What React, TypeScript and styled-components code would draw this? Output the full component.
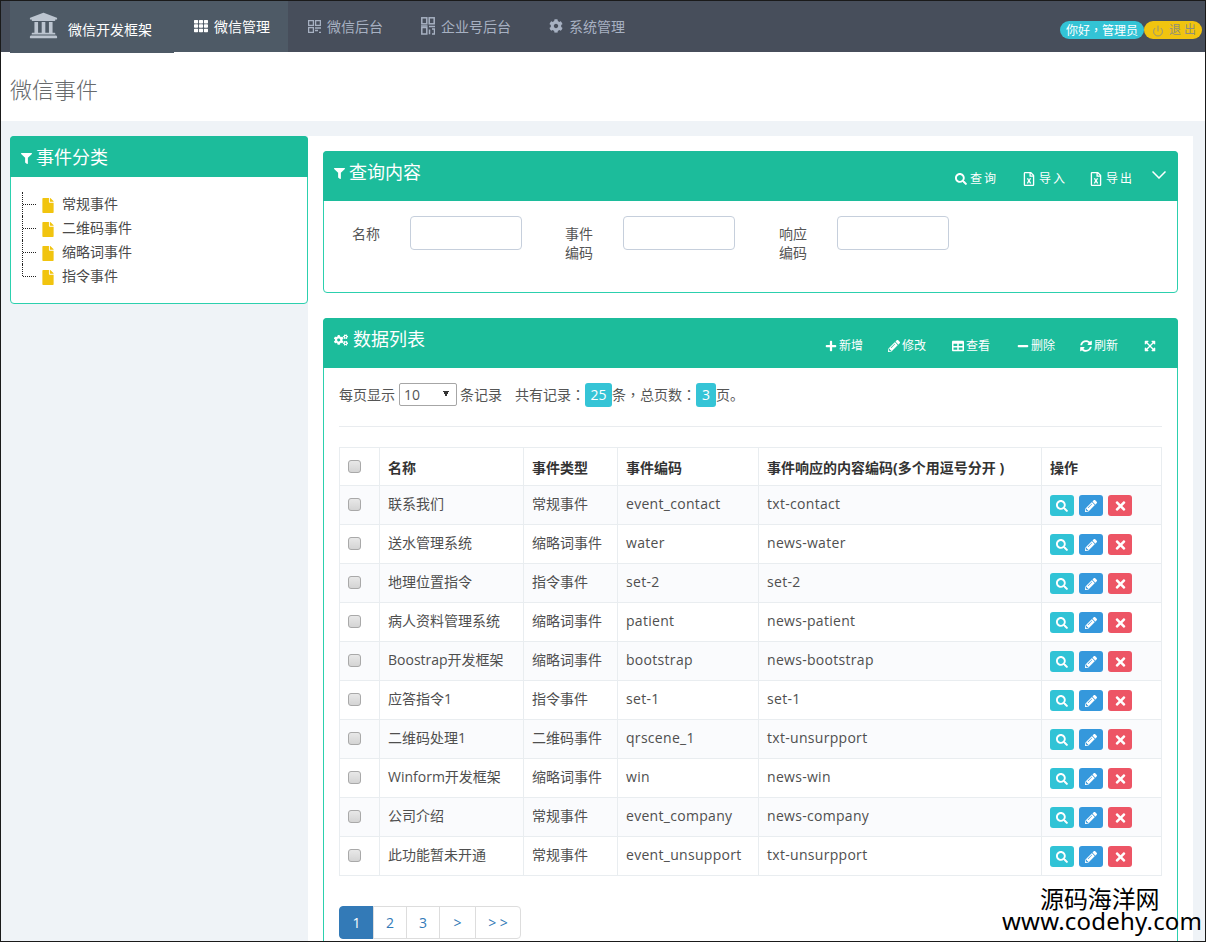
import React from "react";
import styled, { createGlobalStyle } from "styled-components";
import {
  FaUniversity, FaTh, FaCog, FaCogs, FaFilter, FaSearch, FaPlus, FaPencilAlt,
  FaTable, FaMinus, FaSyncAlt, FaExpandArrowsAlt, FaTimes, FaRegFileExcel, FaFile,
} from "react-icons/fa";
import { Power } from "lucide-react";

const FONT = `"Open Sans", "Noto Sans CJK SC", sans-serif`;

const Global = createGlobalStyle`
  html, body { margin: 0; padding: 0; background: #fff; }
  body { font-family: ${FONT}; font-size: 14px; color: #4f4f4f; }
  * { box-sizing: border-box; }
`;

const Frame = styled.div`
  position: relative;
  width: 1206px;
  height: 942px;
  border: 1px solid #1a1a1a;
  overflow: hidden;
  display: flex;
  flex-direction: column;
  background: #eff3f7;
`;

const TopBar = styled.header`
  flex: none;
  height: 51px;
  background: #474e5b;
  display: flex;
  align-items: flex-start;
  padding-left: 9px;
  position: relative;
  z-index: 1;
`;

const Brand = styled.div`
  width: 164px;
  height: 52px;
  background: #4e5a66;
  display: flex;
  align-items: center;
  padding-left: 19px;
  color: #fff;
  font-size: 14px;
  gap: 10px;
  svg { color: #bcc5d0; width: 29px; height: 29px; margin-top: -4px; }
  span { margin-top: 3px; }
`;

const NavItem = styled.div<{ $active?: boolean; $w: number }>`
  width: ${(p) => p.$w}px;
  height: 51px;
  display: flex;
  align-items: center;
  padding-left: 20px;
  gap: 6px;
  font-size: 14px;
  padding-bottom: 1px;
  color: ${(p) => (p.$active ? "#fff" : "#a7b1c2")};
  background: ${(p) => (p.$active ? "#4e5a66" : "transparent")};
  svg { flex: none; }
`;

const NavIconTh = styled(FaTh)`
  width: 14px;
  height: 14px;
`;

const NavIconCog = styled(FaCog)`
  width: 14px;
  height: 14px;
`;

const UserArea = styled.div`
  margin-left: auto;
  margin-top: 20px;
  margin-right: 3px;
  display: flex;
  height: 18px;
`;

const Hello = styled.div`
  width: 84px;
  background: #33c3d5;
  color: #fff;
  font-size: 12px;
  line-height: 18px;
  border-radius: 9px;
  text-align: center;
`;

const Logout = styled.div`
  width: 58px;
  background: #f1c40f;
  color: #8f8f7a;
  font-size: 12px;
  line-height: 18px;
  border-radius: 9px;
  display: flex;
  align-items: center;
  padding-left: 8px;
  gap: 5px;
  svg { width: 12px; height: 12px; color: #74849a; margin-top: 1px; }
`;

const TitleBar = styled.div`
  flex: none;
  height: 69px;
  background: #fff;
  display: flex;
  align-items: center;
  padding: 2px 0 0 9px;
  font-size: 22px;
  color: #676a6c;
  font-weight: 300;
`;

const Content = styled.div`
  flex: 1;
  min-height: 0;
  padding: 15px 0 0 9px;
  display: flex;
  align-items: flex-start;
`;

const Sidebar = styled.aside`
  flex: none;
  width: 298px;
`;

const Main = styled.main`
  flex: none;
  width: 885px;
  height: 100%;
  min-height: 900px;
  background: #fff;
  padding: 15px;
  display: flex;
  flex-direction: column;
  gap: 25px;
`;

const Panel = styled.section<{ $h?: number }>`
  border: 1px solid #2cd0ae;
  border-radius: 4px;
  background: #fff;
  flex: none;
  ${(p) => (p.$h ? `height: ${p.$h}px;` : "")}
`;

const PanelHead = styled.div<{ $h: number }>`
  height: ${(p) => p.$h}px;
  margin: -1px -1px 0;
  background: #1cbc9b;
  border-radius: 4px 4px 0 0;
  color: #fff;
  display: flex;
  align-items: flex-start;
  padding-left: 11px;
`;

const PanelTitle = styled.div<{ $top: number }>`
  font-size: 18px;
  line-height: 24px;
  margin-top: ${(p) => p.$top}px;
  display: flex;
  align-items: center;
  gap: 4px;
  svg { width: 11px; height: 11px; margin-top: 2px; }
`;

const WideIconTitle = styled(PanelTitle)`
  gap: 5px;
  svg { width: 14px; height: 14px; margin-top: 1px; }
`;

const Actions = styled.div<{ $top: number }>`
  margin-left: auto;
  display: flex;
  align-items: center;
  height: 16px;
  margin-top: ${(p) => p.$top}px;
`;

const Action = styled.div<{ $w: number; $spaced?: boolean }>`
  width: ${(p) => p.$w}px;
  display: flex;
  align-items: center;
  font-size: 12px;
  line-height: 16px;
  gap: ${(p) => (p.$spaced ? 3 : 2)}px;
  letter-spacing: ${(p) => (p.$spaced ? "2px" : "0")};
  white-space: nowrap;
  svg { width: 12px; height: 12px; flex: none; }
`;

const FileAction = styled(Action)`
  gap: 4px;
  svg { width: 12px; height: 14px; }
`;

const ChevronAction = styled(Action)`
  svg { width: 14px; height: 8px; margin-top: -9px; fill: none; stroke: #fff; stroke-width: 1.5; }
`;

const Tree = styled.ul`
  list-style: none;
  margin: 0;
  padding: 15px 0 15px 11px;
  height: 126px;
`;

const TreeRow = styled.li`
  height: 24px;
  display: flex;
  align-items: flex-start;
  font-size: 14px;
  line-height: 24px;
  color: #4a4a4a;
`;

const Connector = styled.span<{ $last?: boolean }>`
  flex: none;
  width: 14px;
  height: ${(p) => (p.$last ? 12 : 24)}px;
  border-left: 1px dotted #222;
  position: relative;
  &::after {
    content: "";
    position: absolute;
    left: 0;
    top: 12px;
    width: 13px;
    border-top: 1px dotted #222;
  }
`;

const TreeIcon = styled(FaFile)`
  flex: none;
  width: 12px;
  height: 15px;
  margin: 6px 8px 0 6px;
  color: #f1c40f;
`;

const FilterRow = styled.div`
  display: grid;
  grid-template-columns: 213px 214px 214px;
  padding: 14px 0 0 28px;
  height: 91px;
`;

const FilterGroup = styled.div`
  display: flex;
  align-items: flex-start;
`;

const FilterLabel = styled.label`
  width: 58px;
  flex: none;
  font-size: 14px;
  line-height: 19px;
  padding: 9px 29px 0 0;
  word-break: break-all;
  color: #555;
`;

const Field = styled.input`
  width: 112px;
  height: 34px;
  border: 1px solid #c6cfdc;
  border-radius: 4px;
  background: #fff;
  outline: none;
  margin-top: 1px;
`;

const PanelBody = styled.div`
  padding: 15px 15px 20px;
`;

const PageBar = styled.div`
  display: flex;
  align-items: center;
  height: 22px;
  margin-bottom: 2px;
  font-size: 14px;
  color: #555;
  white-space: pre;
`;

const Punct = styled.span`
  font-family: "Noto Sans CJK TC", sans-serif;
`;

const TotalLabel = styled.span`
  margin-left: 2px;
`;

const PageSelect = styled.select`
  appearance: none;
  align-self: flex-start;
  width: 58px;
  height: 23px;
  margin: 0 3px 0 4px;
  border: 1px solid #a6a6a6;
  border-radius: 2px;
  background:
    linear-gradient(to top right, transparent 50%, #333 50%) 43px 7px / 3px 6px no-repeat,
    linear-gradient(to top left, transparent 50%, #333 50%) 46px 7px / 3px 6px no-repeat,
    #fff;
  font-family: ${FONT};
  font-size: 14px;
  color: #555;
  padding-left: 4px;
`;

const Count = styled.span<{ $w: number }>`
  align-self: flex-start;
  width: ${(p) => p.$w}px;
  height: 24px;
  background: #35c4d6;
  border-radius: 3px;
  color: #fff;
  font-size: 14px;
  line-height: 24px;
  text-align: center;
`;

const Rule = styled.hr`
  border: 0;
  border-top: 1px solid #e9ecef;
  margin: 21px 0 20px;
`;

const Table = styled.table`
  width: 823px;
  border-collapse: collapse;
  table-layout: fixed;
  font-size: 14px;
  color: #4f4f4f;
`;

const Th = styled.th`
  height: 38px;
  border: 1px solid #e9edf0;
  text-align: left;
  padding: 0 8px;
  font-size: 14px;
  font-weight: 700;
  color: #333;
  white-space: nowrap;
`;

const Td = styled.td`
  height: 39px;
  border: 1px solid #e9edf0;
  padding: 0 8px 4px;
  white-space: nowrap;
  font-size: 14px;
`;

const CodeTd = styled(Td)`
  letter-spacing: 0.3px;
  padding-bottom: 3px;
`;

const CheckTd = styled(Td)`
  padding-bottom: 1px;
`;

const Row = styled.tr<{ $odd: boolean }>`
  background: ${(p) => (p.$odd ? "#fafbfd" : "#fff")};
`;

const Check = styled.input.attrs({ type: "checkbox" })`
  appearance: none;
  display: block;
  width: 13px;
  height: 13px;
  margin: 0;
  border: 1px solid #a9a9a9;
  border-radius: 3px;
  background: linear-gradient(#e8e8e8, #d4d4d4);
`;

const Ops = styled.div`
  display: flex;
  gap: 5px;
  padding-top: 5px;
`;

const OpButton = styled.button<{ $bg: string; $w?: number; $h?: number }>`
  width: 24px;
  height: 21px;
  padding: 0;
  border: 0;
  border-radius: 3px;
  color: #fff;
  background: ${(p) => p.$bg};
  display: flex;
  align-items: center;
  justify-content: center;
  svg { width: ${(p) => p.$w ?? 12}px; height: ${(p) => p.$h ?? 12}px; }
`;

const Pager = styled.nav`
  display: flex;
  margin-top: 30px;
  height: 33px;
`;

const PageLink = styled.a<{ $w: number; $active?: boolean }>`
  width: ${(p) => p.$w}px;
  display: flex;
  align-items: center;
  justify-content: center;
  font-size: 14px;
  color: ${(p) => (p.$active ? "#fff" : "#337ab7")};
  background: ${(p) => (p.$active ? "#337ab7" : "#fff")};
  border: 1px solid ${(p) => (p.$active ? "#337ab7" : "#ddd")};
  margin-left: -1px;
  white-space: pre;
  &:first-child { margin-left: 0; border-radius: 4px 0 0 4px; }
  &:last-child { border-radius: 0 4px 4px 0; }
`;

const Watermark = styled.div`
  position: absolute;
  right: 3px;
  bottom: 9px;
  width: 200px;
  color: #000;
  font-family: "Noto Sans", "Noto Sans CJK SC", sans-serif;
  font-size: 24px;
  line-height: 22px;
  letter-spacing: 0.2px;
  white-space: nowrap;
  z-index: 3;
`;

const WatermarkName = styled.div`
  padding-left: 38px;
  letter-spacing: -0.1px;
`;

function QrSmall() {
  return (
    <svg width="13" height="13" viewBox="0 0 13 13" fill="none" stroke="currentColor" strokeWidth="1.300">
      <rect x="0.600" y="0.600" width="4.800" height="4.800" />
      <rect x="7.600" y="0.600" width="4.800" height="4.800" />
      <rect x="0.600" y="7.600" width="4.800" height="4.800" />
      <path d="M7 8h6M7 10.500h3M11 12.400h2" />
    </svg>
  );
}

function QrTall() {
  return (
    <svg width="14" height="18" viewBox="0 0 14 18" fill="none" stroke="currentColor" strokeWidth="1.500">
      <rect x="0.800" y="0.800" width="5" height="6" />
      <rect x="8.200" y="0.800" width="5" height="6" />
      <rect x="0.800" y="10.500" width="5" height="6.500" />
      <path d="M0 9h6.500M8 9.500h6M8.500 12.500v4.700M11 12h2.500v5H11" />
    </svg>
  );
}

const rows = [
  ["联系我们", "常规事件", "event_contact", "txt-contact"],
  ["送水管理系统", "缩略词事件", "water", "news-water"],
  ["地理位置指令", "指令事件", "set-2", "set-2"],
  ["病人资料管理系统", "缩略词事件", "patient", "news-patient"],
  ["Boostrap开发框架", "缩略词事件", "bootstrap", "news-bootstrap"],
  ["应答指令1", "指令事件", "set-1", "set-1"],
  ["二维码处理1", "二维码事件", "qrscene_1", "txt-unsurpport"],
  ["Winform开发框架", "缩略词事件", "win", "news-win"],
  ["公司介绍", "常规事件", "event_company", "news-company"],
  ["此功能暂未开通", "常规事件", "event_unsupport", "txt-unsurpport"],
];

const tree = ["常规事件", "二维码事件", "缩略词事件", "指令事件"];

export default function App() {
  return (
    <>
      <Global />
      <Frame>
        <TopBar>
          <Brand><FaUniversity /><span>微信开发框架</span></Brand>
          <NavItem $active $w={114}><NavIconTh />微信管理</NavItem>
          <NavItem $w={113}><QrSmall />微信后台</NavItem>
          <NavItem $w={128}><QrTall />企业号后台</NavItem>
          <NavItem $w={120}><NavIconCog />系统管理</NavItem>
          <UserArea>
            <Hello>你好<Punct>，</Punct>管理员</Hello>
            <Logout><Power strokeWidth={1.5} />退 出</Logout>
          </UserArea>
        </TopBar>
        <TitleBar>微信事件</TitleBar>
        <Content>
          <Sidebar>
            <Panel $h={168}>
              <PanelHead $h={41}>
                <PanelTitle $top={9}><FaFilter />事件分类</PanelTitle>
              </PanelHead>
              <Tree>
                {tree.map((t, i) => (
                  <TreeRow key={t}>
                    <Connector $last={i === tree.length - 1} />
                    <TreeIcon />
                    {t}
                  </TreeRow>
                ))}
              </Tree>
            </Panel>
          </Sidebar>
          <Main>
            <Panel $h={142}>
              <PanelHead $h={50}>
                <PanelTitle $top={9}><FaFilter />查询内容</PanelTitle>
                <Actions $top={20}>
                  <Action $w={68} $spaced><FaSearch />查询</Action>
                  <FileAction $w={67} $spaced><FaRegFileExcel />导入</FileAction>
                  <FileAction $w={62} $spaced><FaRegFileExcel />导出</FileAction>
                  <ChevronAction $w={26}>
                    <svg viewBox="0 0 14 8"><path d="M0.500 0.500 L7 7 L13.500 0.500" /></svg>
                  </ChevronAction>
                </Actions>
              </PanelHead>
              <FilterRow>
                <FilterGroup><FilterLabel>名称</FilterLabel><Field /></FilterGroup>
                <FilterGroup><FilterLabel>事件编码</FilterLabel><Field /></FilterGroup>
                <FilterGroup><FilterLabel>响应编码</FilterLabel><Field /></FilterGroup>
              </FilterRow>
            </Panel>
            <Panel>
              <PanelHead $h={50}>
                <WideIconTitle $top={9}><FaCogs />数据列表</WideIconTitle>
                <Actions $top={20}>
                  <Action $w={63}><FaPlus />新增</Action>
                  <Action $w={64}><FaPencilAlt />修改</Action>
                  <Action $w={65}><FaTable />查看</Action>
                  <Action $w={63}><FaMinus />删除</Action>
                  <Action $w={64}><FaSyncAlt />刷新</Action>
                  <Action $w={34}><FaExpandArrowsAlt /></Action>
                </Actions>
              </PanelHead>
              <PanelBody>
                <PageBar>
                  每页显示
                  <PageSelect defaultValue="10"><option>10</option><option>20</option></PageSelect>
                  条记录{"   "}<TotalLabel>共有记录</TotalLabel><Punct>：</Punct><Count $w={27}>25</Count>条<Punct>，</Punct>总页数<Punct>：</Punct><Count $w={20}>3</Count>页。
                </PageBar>
                <Rule />
                <Table>
                  <colgroup>
                    <col width={40} /><col width={144} /><col width={94} /><col width={141} /><col width={283} /><col width={120} />
                  </colgroup>
                  <thead>
                    <tr>
                      <Th><Check /></Th>
                      <Th>名称</Th>
                      <Th>事件类型</Th>
                      <Th>事件编码</Th>
                      <Th>事件响应的内容编码(多个用逗号分开 )</Th>
                      <Th>操作</Th>
                    </tr>
                  </thead>
                  <tbody>
                    {rows.map((r, i) => (
                      <Row key={r[0]} $odd={i % 2 === 0}>
                        <CheckTd><Check /></CheckTd>
                        <Td>{r[0]}</Td>
                        <Td>{r[1]}</Td>
                        <CodeTd>{r[2]}</CodeTd>
                        <CodeTd>{r[3]}</CodeTd>
                        <Td>
                          <Ops>
                            <OpButton $bg="#31c3d6"><FaSearch /></OpButton>
                            <OpButton $bg="#3598dc"><FaPencilAlt /></OpButton>
                            <OpButton $bg="#ed5565" $w={13} $h={14}><FaTimes /></OpButton>
                          </Ops>
                        </Td>
                      </Row>
                    ))}
                  </tbody>
                </Table>
                <Pager>
                  <PageLink $w={35} $active>1</PageLink>
                  <PageLink $w={34}>2</PageLink>
                  <PageLink $w={34}>3</PageLink>
                  <PageLink $w={37}>&gt;</PageLink>
                  <PageLink $w={46}>&gt; &gt;</PageLink>
                </Pager>
              </PanelBody>
            </Panel>
          </Main>
        </Content>
        <Watermark>
          <WatermarkName>源码海洋网</WatermarkName>
          www.codehy.com
        </Watermark>
      </Frame>
    </>
  );
}
